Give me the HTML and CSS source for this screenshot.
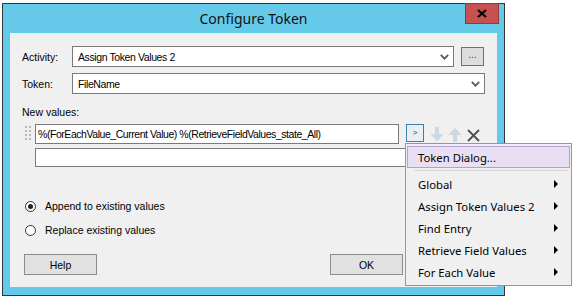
FILE: index.html
```html
<!DOCTYPE html>
<html lang="en">
<head>
  <meta charset="UTF-8">
  <title>Configure Token</title>
  <link rel="stylesheet" href="styles.css">
</head>
<body>
  <div class="window">
    <div class="titlebar">Configure Token</div>
    <button class="close-btn">
      <svg width="10" height="9" viewBox="0 0 10 9"><path d="M1 1 L9 8 M9 1 L1 8" stroke="#000" stroke-width="2.2"/></svg>
    </button>

    <div class="panel">
      <!-- Activity -->
      <div class="row">
        <span class="field-label">Activity:</span>
        <div class="combo combo-activity">
          <span>Assign Token Values 2</span>
          <svg class="chevron" width="9" height="6" viewBox="0 0 9 6"><path d="M0.8 0.8 L4.5 4.6 L8.2 0.8" fill="none" stroke="#5a5a5a" stroke-width="1.8"/></svg>
        </div>
        <button class="browse-btn">...</button>
      </div>

      <!-- Token -->
      <div class="row row-token">
        <span class="field-label">Token:</span>
        <div class="combo combo-token">
          <span>FileName</span>
          <svg class="chevron" width="9" height="6" viewBox="0 0 9 6"><path d="M0.8 0.8 L4.5 4.6 L8.2 0.8" fill="none" stroke="#5a5a5a" stroke-width="1.8"/></svg>
        </div>
      </div>

      <div class="section-label">New values:</div>

      <div class="value-row">
        <svg class="grip" width="7" height="16" viewBox="0 0 7 16">
          <rect x="0" y="0" width="2" height="2"/><rect x="4" y="0" width="2" height="2"/>
          <rect x="0" y="4" width="2" height="2"/><rect x="4" y="4" width="2" height="2"/>
          <rect x="0" y="8" width="2" height="2"/><rect x="4" y="8" width="2" height="2"/>
          <rect x="0" y="12" width="2" height="2"/><rect x="4" y="12" width="2" height="2"/>
        </svg>
        <div class="textbox">%(ForEachValue_Current Value) %(RetrieveFieldValues_state_All)</div>
        <button class="insert-btn">&gt;</button>
        <svg class="move-icon" width="14" height="15" viewBox="0 0 14 15"><path d="M5 0 H9 V7 H13.5 L7 14.5 L0.5 7 H5 Z" fill="#cbd9e5"/></svg>
        <svg class="move-icon up" width="14" height="15" viewBox="0 0 14 15"><path d="M5 15 H9 V8 H13.5 L7 0.5 L0.5 8 H5 Z" fill="#cbd9e5"/></svg>
        <svg class="remove-icon" width="13" height="13" viewBox="0 0 13 13"><path d="M1 1 L12 12 M12 1 L1 12" stroke="#4d4d4d" stroke-width="1.8"/></svg>
      </div>

      <div class="value-row second">
        <div class="textbox textbox-wide"></div>
      </div>

      <div class="radio-group">
        <div class="radio-row">
          <span class="radio checked"></span>
          <span>Append to existing values</span>
        </div>
        <div class="radio-row">
          <span class="radio"></span>
          <span>Replace existing values</span>
        </div>
      </div>

      <div class="button-row">
        <button class="btn">Help</button>
        <button class="btn btn-ok">OK</button>
      </div>
    </div>
  </div>

  <!-- Token menu -->
  <div class="context-menu">
    <div class="menu-item active">Token Dialog...</div>
    <div class="menu-sep"></div>
    <div class="menu-item">Global <span class="sub-arrow"></span></div>
    <div class="menu-item">Assign Token Values 2 <span class="sub-arrow"></span></div>
    <div class="menu-item">Find Entry <span class="sub-arrow"></span></div>
    <div class="menu-item">Retrieve Field Values <span class="sub-arrow"></span></div>
    <div class="menu-item">For Each Value <span class="sub-arrow"></span></div>
  </div>
</body>
</html>
```

FILE: styles.css
```css
body {
  margin: 0;
  background-color: white;
  font-family: "Liberation Sans", Arial, sans-serif;
  font-size: 10.5px;
  color: #000;
}
.window {
  position: relative;
  margin: 3px 0 0 2px;
  width: 503px;
  height: 293px;
  box-sizing: border-box;
  border: 1px solid #353535;
  background-color: #65cae9;
  padding: 0 7px;
}
.titlebar {
  height: 29px;
  line-height: 29px;
  text-align: center;
  font-family: "Noto Sans", sans-serif;
  font-size: 14px;
  color: #111;
}
.close-btn {
  position: absolute;
  top: -1px;
  right: 5px;
  width: 34px;
  height: 21px;
  padding: 0;
  border: 1px solid #8e3c37;
  background-color: #c75050;
  display: flex;
  align-items: center;
  justify-content: center;
}
.panel {
  height: 254px;
  background-color: #f0f0f0;
  padding: 13px 12px 0 12px;
  box-sizing: border-box;
}
.row {
  display: flex;
  align-items: center;
  height: 21px;
}
.row-token {
  margin-top: 6px;
}
.field-label {
  width: 50px;
}
.combo {
  height: 21px;
  box-sizing: border-box;
  border: 1px solid #7a7a7a;
  background-color: white;
  display: flex;
  align-items: center;
  justify-content: space-between;
  padding: 0 4px 0 5px;
  letter-spacing: -0.4px;
}
.combo-activity {
  width: 382px;
}
.combo-token {
  width: 413px;
}
.chevron {
  margin-top: 1px;
}
.browse-btn {
  margin-left: 7px;
  width: 23px;
  height: 19px;
  padding: 0 0 3px 0;
  border: 1px solid #707070;
  background-color: #dddddd;
  color: #6b1f6b;
  font-family: "Liberation Sans", sans-serif;
  font-size: 10px;
  line-height: 10px;
}
.section-label {
  margin-top: 12px;
  line-height: 13px;
}
.value-row {
  display: flex;
  align-items: flex-start;
  margin-top: 5px;
}
.value-row.second {
  margin-top: 4px;
  padding-left: 13px;
}
.grip {
  fill: #b8b8b8;
  margin: 2px 0 0 3px;
}
.textbox {
  margin-left: 3px;
  width: 364px;
  height: 20px;
  box-sizing: border-box;
  border: 1px solid #7a7a7a;
  background-color: white;
  padding: 0 2px;
  line-height: 18px;
  white-space: nowrap;
  overflow: hidden;
  letter-spacing: -0.45px;
}
.textbox-wide {
  margin-left: 0;
  width: 430px;
  height: 19px;
}
.insert-btn {
  margin-left: 7px;
  width: 18px;
  height: 18px;
  padding: 0;
  border: 1px solid #3c7fb1;
  background-color: #e9eef2;
  font-family: "Liberation Sans", sans-serif;
  font-size: 8px;
  line-height: 14px;
  color: #333;
}
.move-icon {
  margin: 3px 0 0 6px;
}
.move-icon.up {
  margin-left: 4px;
}
.remove-icon {
  margin: 5px 0 0 5px;
}
.radio-group {
  margin-top: 31px;
  display: flex;
  flex-direction: column;
  gap: 8px;
}
.radio-row {
  display: flex;
  align-items: center;
  height: 16px;
}
.radio {
  width: 11px;
  height: 11px;
  box-sizing: border-box;
  border: 1px solid #333;
  border-radius: 50%;
  background-color: white;
  margin: 0 9px 0 3px;
  display: flex;
  align-items: center;
  justify-content: center;
}
.radio.checked::after {
  content: "";
  width: 5px;
  height: 5px;
  border-radius: 50%;
  background-color: #222;
}
.button-row {
  margin-top: 16px;
  display: flex;
  justify-content: space-between;
  padding-left: 2px;
}
.btn {
  width: 73px;
  height: 21px;
  padding: 0;
  border: 1px solid #8c8c8c;
  background-color: #e1e1e1;
  font-family: "Liberation Sans", sans-serif;
  font-size: 10.5px;
  color: #000;
}
.btn-ok {
  margin-right: 82px;
}
.context-menu {
  position: absolute;
  left: 405px;
  top: 143px;
  width: 167px;
  box-sizing: border-box;
  border: 1px solid #979797;
  background-color: #f0f0f0;
  padding: 2px 1px 2px 1px;
  font-family: "Noto Sans", sans-serif;
  font-size: 11.3px;
  color: #000;
}
.menu-item {
  height: 22px;
  box-sizing: border-box;
  display: flex;
  align-items: center;
  justify-content: space-between;
  padding: 0 12px 0 11px;
}
.menu-item.active {
  background-color: #e8e0f2;
  border: 1px solid #b39ddb;
  padding-left: 10px;
}
.menu-sep {
  height: 1px;
  background-color: #d7d7d7;
  margin: 2px 1px 2px 7px;
}
.sub-arrow {
  width: 0;
  height: 0;
  border-top: 4px solid transparent;
  border-bottom: 4px solid transparent;
  border-left: 4px solid #000;
}
```
